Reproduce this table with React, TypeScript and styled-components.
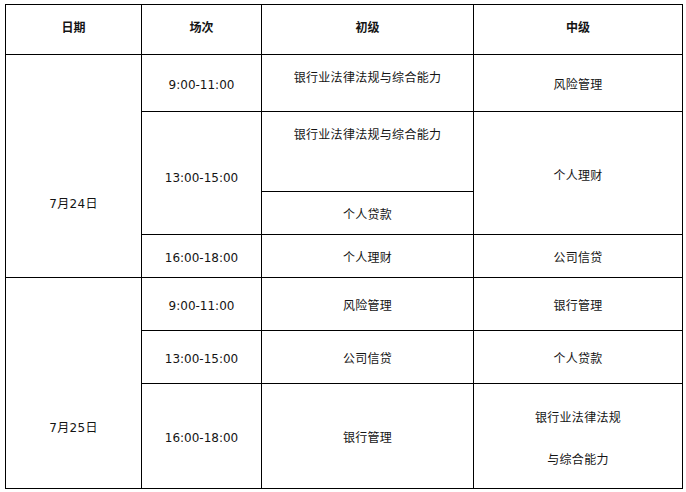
import styled, { createGlobalStyle } from "styled-components";

const GlobalStyle = createGlobalStyle`
  html, body {
    margin: 0;
    padding: 0;
    background: #fff;
  }
  body {
    font-family: "DejaVu Sans", "Noto Sans CJK SC", sans-serif;
    color: #141414;
  }
`;

const Page = styled.div`
  padding: 4px 0 0 5px;
`;

const Table = styled.table`
  border-collapse: collapse;
  table-layout: fixed;
  width: 677px;
  font-size: 12px;
  line-height: 16px;
`;

const Row = styled.tr<{ $h: number }>`
  height: ${(p) => p.$h}px;
`;

const HeadCell = styled.th`
  border: 1px solid #000;
  font-weight: bold;
  text-align: center;
  vertical-align: top;
  padding: 15px 0 0;
`;

// cells are centred in their row unless a fixed top offset is given
const Cell = styled.td<{ $top?: number }>`
  border: 1px solid #000;
  text-align: center;
  vertical-align: ${(p) => (p.$top !== undefined ? "top" : "middle")};
  padding: ${(p) => (p.$top !== undefined ? `${p.$top}px 0 0` : "4px 0 0")};
  letter-spacing: 0.3px;
`;

const Time = styled(Cell)`
  letter-spacing: 0;
`;

const Line = styled.p<{ $gap?: number }>`
  margin: 0;
  & + & {
    margin-top: ${(p) => p.$gap ?? 26}px;
  }
`;

const LAW = "银行业法律法规与综合能力";

export default function App() {
  return (
    <Page>
      <GlobalStyle />
      <Table>
        <colgroup>
          <col style={{ width: 136 }} />
          <col style={{ width: 120 }} />
          <col style={{ width: 212 }} />
          <col style={{ width: 209 }} />
        </colgroup>
        <thead>
          <Row $h={50}>
            <HeadCell>日期</HeadCell>
            <HeadCell>场次</HeadCell>
            <HeadCell>初级</HeadCell>
            <HeadCell>中级</HeadCell>
          </Row>
        </thead>
        <tbody>
          <Row $h={57}>
            <Cell rowSpan={4} $top={141}>7月24日</Cell>
            <Time>9:00-11:00</Time>
            <Cell $top={15}>{LAW}</Cell>
            <Cell>风险管理</Cell>
          </Row>
          <Row $h={80}>
            <Time rowSpan={2} $top={58}>13:00-15:00</Time>
            <Cell $top={15}>{LAW}</Cell>
            <Cell rowSpan={2} $top={56}>个人理财</Cell>
          </Row>
          <Row $h={43}>
            <Cell>个人贷款</Cell>
          </Row>
          <Row $h={43}>
            <Time>16:00-18:00</Time>
            <Cell>个人理财</Cell>
            <Cell>公司信贷</Cell>
          </Row>
          <Row $h={53}>
            <Cell rowSpan={3} $top={142}>7月25日</Cell>
            <Time>9:00-11:00</Time>
            <Cell>风险管理</Cell>
            <Cell>银行管理</Cell>
          </Row>
          <Row $h={53}>
            <Time>13:00-15:00</Time>
            <Cell>公司信贷</Cell>
            <Cell>个人贷款</Cell>
          </Row>
          <Row $h={105}>
            <Time>16:00-18:00</Time>
            <Cell>银行管理</Cell>
            <Cell $top={26}>
              <Line>银行业法律法规</Line>
              <Line>与综合能力</Line>
            </Cell>
          </Row>
        </tbody>
      </Table>
    </Page>
  );
}
